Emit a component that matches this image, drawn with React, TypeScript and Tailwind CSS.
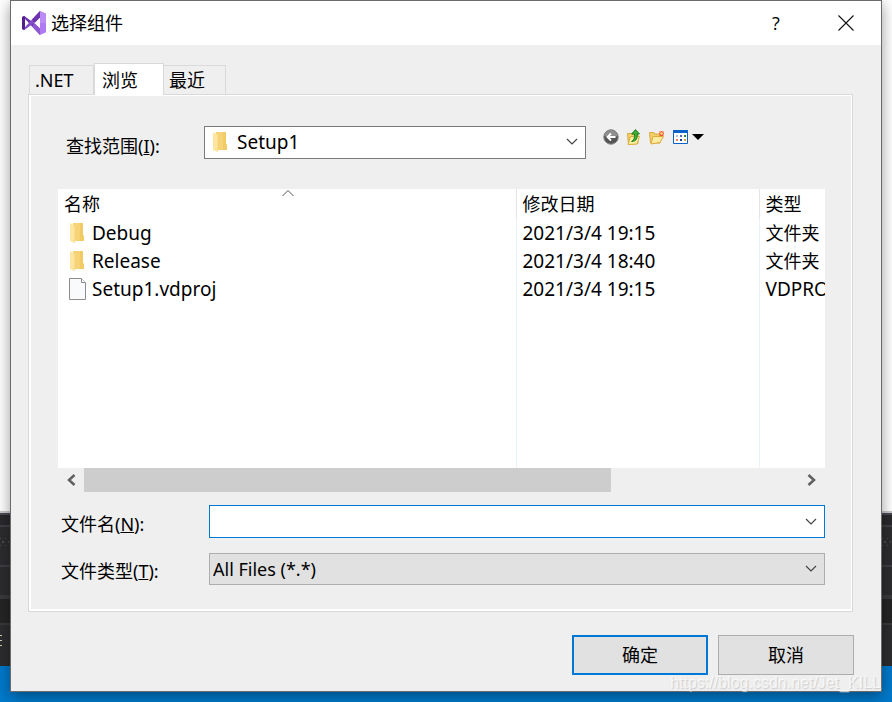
import { useState } from 'react';

const files = [
    { name: 'Debug', date: '2021/3/4 19:15', type: '文件夹', folder: true },
    { name: 'Release', date: '2021/3/4 18:40', type: '文件夹', folder: true },
    { name: 'Setup1.vdproj', date: '2021/3/4 19:15', type: 'VDPROJ', folder: false },
];

const tabs = ['.NET', '浏览', '最近'];

const FolderIcon = () => (
    <svg className="block" width="16" height="22" viewBox="0 0 16 22">
        <path d="M4 1h10v12l1 1v5H4z" fill="#f5d376" />
        <path d="M11 1h3v12l1 1v5h-4z" fill="#f2cb65" />
        <path d="M1 1l5 3v17l-5-2z" fill="#fee5a0" />
        <path d="M5 3.500l1 .5v17l-1-.4z" fill="#f9dc8c" />
    </svg>
);

const FileIcon = () => (
    <svg className="block" width="18" height="22" viewBox="0 0 18 22">
        <path d="M.5.500h12l4 4v17H.500z" fill="#f9fafb" stroke="#8c8c8c" />
        <path d="M12.500.500v4h4" fill="#fff" stroke="#8c8c8c" />
    </svg>
);

const VsLogo = () => (
    <svg className="block" width="24" height="24" viewBox="0 0 24 24">
        <path d="M0 6l2-1.200 1 .7v13l-1 .7L0 18z" fill="#52218a" />
        <path d="M2 4.800L8.500 9.500 18 17.500V24L3 8z" fill="#6c33af" />
        <path d="M2 19.200L3 16 18 0v6.500L8.500 14.500z" fill="#854cc7" />
        <path d="M10 8.500L18 0v6.500L12.500 12z" fill="#6c33af" />
        <path d="M10 15.500L18 24v-6.500L12.500 12z" fill="#8f58d3" />
        <path d="M3 8.500v7L6.500 12z" fill="#fff" />
        <path d="M18 0l6 2.700v18.600L18 24z" fill="#b179f1" />
        <path d="M18 0l6 2.700V12h-6z" fill="#bd8bf5" />
    </svg>
);

const Chevron = () => (
    <svg className="block" width="12" height="8" viewBox="0 0 12 8" fill="none" stroke="#444" strokeWidth="1.200">
        <path d="M1 1l5 5 5-5" />
    </svg>
);

const BackIcon = () => (
    <svg width="16" height="16" viewBox="0 0 16 16">
        <circle cx="8" cy="8" r="7.200" fill="#555" stroke="#7d7d7d" />
        <path d="M1.500 7a6.500 6 0 0 1 13 0q-6 2.500-13 0z" fill="#8f8f8f" />
        <path d="M12.500 8H5M8 4.500L4.500 8 8 11.500" fill="none" stroke="#fff" strokeWidth="1.800" />
    </svg>
);

const UpIcon = () => (
    <svg width="16" height="16" viewBox="0 0 16 16">
        <path d="M1.500 4.500h3.500l1 1h6v9l-9.500 1z" fill="#f3d36c" stroke="#d6a83e" />
        <path d="M4.500 7.500h9l-2.500 7.500-9 .5z" fill="#fdf0a5" stroke="#dcae42" />
        <path d="M5.500 12.500q3.500-1.500 3-7.500H5.500L9.500.500 13.500 5h-2.200q.7 7.500-5.800 7.500z" fill="#3fae38" stroke="#187a1a" strokeWidth=".9" />
    </svg>
);

const NewFolderIcon = () => (
    <svg width="16" height="16" viewBox="0 0 16 16">
        <path d="M.5 3.500h4.500l1 1.500h5v9H1.500z" fill="#f3cf68" stroke="#dba943" />
        <path d="M4 7.500h10.500l-3.500 6-9 1.500z" fill="#fdec9f" stroke="#dfaa40" />
        <path d="M12.500 2v5M10 4.500h5M10.500 2.500l4 4M14.500 2.500l-4 4" stroke="#ee5a34" strokeWidth="1.200" />
        <circle cx="12.500" cy="4.500" r="1.200" fill="#ffe27a" />
    </svg>
);

const ViewIcon = () => (
    <svg width="16" height="16" viewBox="0 0 16 16">
        <path d="M1.500 1.500h14v13h-14z" fill="#fff" stroke="#0b62c9" />
        <path d="M1 1h15v3H1z" fill="#0b62c9" />
        <path d="M4 6h2v2H4z" fill="#b5bfd8" />
        <path d="M8 6h2v2H8z" fill="#526bb8" />
        <path d="M12 6h2v2h-2z" fill="#2b8a3b" />
        <path d="M4 10h2v2H4z" fill="#ee8059" />
        <path d="M8 10h2v2H8z" fill="#163d99" />
        <path d="M12 10h2v2h-2z" fill="#d3a625" />
    </svg>
);

const Grip = () => (
    <svg className="block" width="10" height="8" viewBox="0 0 10 8" fill="#4b4b50">
        <path d="M0 0h1v1H0zM5 0h1v1H5zM2 3h2v2H2zM8 3h1v2H8zM0 7h1v1H0zM5 7h1v1H5z" />
    </svg>
);

// the editor window that is open behind the dialog
const Backdrop = () => (
    <div className="absolute inset-0 flex flex-col overflow-hidden" aria-hidden="true">
        <div className="flex-1 border-b-2 border-[#c8c8cc] bg-white" />
        <div className="flex h-[153px] flex-col bg-[#2d2d30]">
            <div className="h-3 border-t-2 border-[#4a4a55] bg-[#29292c]" />
            <div className="flex h-10 items-center justify-between border-t-2 border-[#3f3f46] pb-2">
                <Grip />
                <Grip />
            </div>
            <div className="h-[30px] border-t-2 border-[#3f3f46]" />
            <div className="h-[30px] border-t-4 border-b-2 border-[#3a3a3d] bg-[#252526]" />
            <div className="flex flex-1 items-center pb-2.5">
                <svg width="2" height="12" viewBox="0 0 2 12" fill="#cfcfb0">
                    <path d="M0 0h2v1H0zM0 5h2v1H0zM0 10h2v1H0z" />
                </svg>
            </div>
        </div>
        <div className="h-9 bg-[#007acc]" />
    </div>
);

const App = () => {
    const [tab, setTab] = useState('浏览');
    const [fileName, setFileName] = useState('');

    return (
        <div className="relative min-h-screen overflow-hidden pb-2.5 font-['Noto_Sans','Noto_Sans_CJK_SC',sans-serif] text-lg leading-7 text-black">
            <Backdrop />
            <div role="dialog" aria-labelledby="title" className="relative mx-2.5 border border-[#6b6b6b] bg-[#efefef] pb-4 shadow-[0_4px_14px_rgba(0,0,0,0.4)]">
                <header className="flex h-11 items-center bg-white pl-[11px]">
                    <VsLogo />
                    <h1 id="title" className="flex-1 pl-[5px]">选择组件</h1>
                    <button aria-label="帮助" className="w-[70px] text-center font-['Open_Sans',sans-serif]">?</button>
                    <button aria-label="关闭" className="flex w-[70px] justify-center">
                        <svg width="16" height="16" viewBox="0 0 16 16" stroke="#111" strokeWidth="1.100">
                            <path d="M.5.500l15 15M15.500.500l-15 15" />
                        </svg>
                    </button>
                </header>

                <div className="mt-[18px] mr-7 ml-[17px]">
                    <div role="tablist" className="flex h-[31px] items-end pl-px">
                        {tabs.map(t => (
                            <button
                                key={t}
                                role="tab"
                                aria-selected={t === tab}
                                onClick={() => setTab(t)}
                                className={
                                    t === tab
                                        ? 'relative -mb-px h-8 w-[70px] border border-b-0 border-[#d9d9d9] bg-white pl-[7px] text-left'
                                        : 'h-[29px] w-[65px] border border-b-0 border-[#d9d9d9] pl-[5px] text-left last:-ml-px last:w-[63px]'
                                }
                            >
                                {t}
                            </button>
                        ))}
                    </div>

                    <div role="tabpanel" className="border border-[#d9d9d9]">
                        <div className="border-2 border-t border-r border-white pt-7 pr-[26px] pb-6 pl-[27px]">
                            <div className="flex items-center">
                                <label htmlFor="look-in" className="w-[146px] pt-2 pl-2">
                                    查找范围(<u>I</u>):
                                </label>
                                <div className="relative w-[382px]">
                                    <select id="look-in" className="block h-[33px] w-full appearance-none border border-[#7a7a7a] bg-white pl-8 text-[19px] leading-7">
                                        <option>Setup1</option>
                                    </select>
                                    <div className="pointer-events-none absolute inset-y-0 left-2 flex items-center"><FolderIcon /></div>
                                    <div className="pointer-events-none absolute inset-y-0 right-2 flex items-center"><Chevron /></div>
                                </div>
                                <div className="flex gap-[7px] pb-2.5 pl-[17px]">
                                    <button aria-label="后退"><BackIcon /></button>
                                    <button aria-label="向上一级"><UpIcon /></button>
                                    <button aria-label="新建文件夹"><NewFolderIcon /></button>
                                    <button aria-label="查看" className="flex items-center gap-1">
                                        <ViewIcon />
                                        <svg width="12" height="6" viewBox="0 0 12 6"><path d="M0 0h12L6 6z" /></svg>
                                    </button>
                                </div>
                            </div>

                            <div className="relative mt-[29px] h-[279px] overflow-hidden bg-white">
                                <svg className="absolute top-0 left-[223px]" width="14" height="8" viewBox="0 0 14 8" fill="none" stroke="#555">
                                    <path d="M1.500 7L7 1.500 12.500 7" />
                                </svg>
                                <table className="h-full w-full table-fixed border-collapse text-left">
                                    <thead>
                                        <tr className="h-[30px]">
                                            <th className="w-[458px] border-r border-[#e5e5e5] pl-1.5 font-normal">名称</th>
                                            <th className="w-[243px] border-r border-[#e5e5e5] pl-1.5 font-normal">修改日期</th>
                                            <th className="pl-1.5 font-normal">类型</th>
                                        </tr>
                                    </thead>
                                    <tbody>
                                        {files.map(f => (
                                            <tr key={f.name} className="h-7">
                                                <td className="border-r border-[#e9f1fb] text-[19px] leading-7">
                                                    <div className="flex items-center">
                                                        <span className="flex w-[34px] pl-[11px]">
                                                            {f.folder ? <FolderIcon /> : <FileIcon />}
                                                        </span>
                                                        {f.name}
                                                    </div>
                                                </td>
                                                <td className="border-r border-[#e9f1fb] pl-1.5 text-[19px] leading-7">{f.date}</td>
                                                <td className={`overflow-hidden pl-1.5 whitespace-nowrap ${f.folder ? '' : 'text-[19px] leading-7'}`}>{f.type}</td>
                                            </tr>
                                        ))}
                                        <tr>
                                            <td className="border-r border-[#e9f1fb]" />
                                            <td className="border-r border-[#e9f1fb]" />
                                            <td />
                                        </tr>
                                    </tbody>
                                </table>
                            </div>
                            <div className="flex h-6">
                                <button aria-label="向左滚动" className="flex w-[26px] items-center justify-center">
                                    <svg width="10" height="12" viewBox="0 0 10 12" fill="none" stroke="#606060" strokeWidth="2.500"><path d="M8.500 1L3 6l5.500 5" /></svg>
                                </button>
                                <div className="flex-1"><div className="h-full w-[527px] bg-[#cdcdcd]" /></div>
                                <button aria-label="向右滚动" className="flex w-[26px] items-center justify-center">
                                    <svg width="10" height="12" viewBox="0 0 10 12" fill="none" stroke="#606060" strokeWidth="2.500"><path d="M1.500 1L7 6l-5.500 5" /></svg>
                                </button>
                            </div>

                            <div className="mt-[13px] flex items-center">
                                <label htmlFor="file-name" className="w-[151px] pt-1 pl-[3px]">
                                    文件名(<u>N</u>):
                                </label>
                                <div className="flex h-[33px] flex-1 border border-[#0078d7] bg-white">
                                    <input
                                        id="file-name"
                                        value={fileName}
                                        onChange={e => setFileName(e.target.value)}
                                        className="min-w-0 flex-1 px-1 outline-none"
                                    />
                                    <button aria-label="展开" className="pr-[7px]"><Chevron /></button>
                                </div>
                            </div>
                            <div className="mt-[15px] flex items-center">
                                <label htmlFor="file-type" className="w-[151px] pt-1 pl-[3px]">
                                    文件类型(<u>T</u>):
                                </label>
                                <div className="relative flex-1">
                                    <select id="file-type" className="block h-8 w-full appearance-none border border-[#adadad] bg-[#e1e1e1] pl-[3px]">
                                        <option>All Files (*.*)</option>
                                    </select>
                                    <div className="pointer-events-none absolute inset-y-0 right-2 flex items-center"><Chevron /></div>
                                </div>
                            </div>
                        </div>
                    </div>
                </div>

                <div className="mt-[23px] mr-[27px] flex justify-end gap-2.5">
                    <button className="h-10 w-[136px] border-2 border-[#0078d7] bg-[#e1e1e1]">确定</button>
                    <button className="h-10 w-[136px] border border-[#adadad] bg-[#e1e1e1]">取消</button>
                </div>
                <p className="absolute right-0 bottom-0 font-['Liberation_Sans',sans-serif] text-base leading-4 text-white/70 [text-shadow:1px_1px_1px_#ccc]">
                    https://blog.csdn.net/Jet_KILL
                </p>
            </div>
        </div>
    );
};

export default App;
